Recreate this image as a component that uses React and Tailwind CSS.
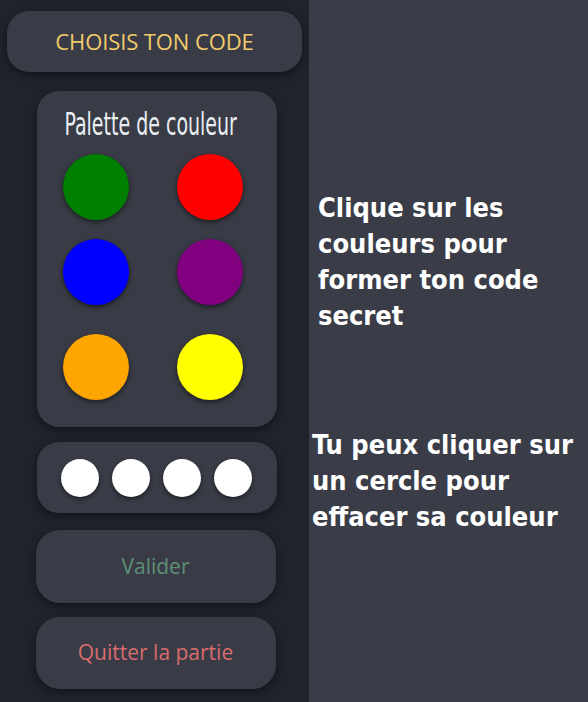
import React from 'react';

const PALETTE = [
  { name: 'vert', color: 'bg-[#008000]', mt: 'mt-[13px]' },
  { name: 'rouge', color: 'bg-[#ff0000]', mt: 'mt-[13px]' },
  { name: 'bleu', color: 'bg-[#0000ff]', mt: 'mt-[19px]' },
  { name: 'violet', color: 'bg-[#800080]', mt: 'mt-[19px]' },
  { name: 'orange', color: 'bg-[#ffa500]', mt: 'mt-[29px]' },
  { name: 'jaune', color: 'bg-[#ffff00]', mt: 'mt-[29px]' },
];

export default function App() {
  return (
    <div className="flex w-[588px] h-[702px] overflow-hidden bg-[#3a3d47]">
      {/* Sidebar */}
      <div className="w-[309px] h-full bg-[#1f232c] flex flex-col items-center font-['Open_Sans',sans-serif]">
        <button className="mt-[11px] w-[295px] h-[61px] rounded-[22px] bg-[#393c46] shadow-[0_3px_8px_rgba(0,0,0,0.45)] text-[#f2cb6c] text-[22px] tracking-[-0.1px]">
          CHOISIS TON CODE
        </button>

        {/* Palette */}
        <div className="mt-[19px] ml-[4px] w-[240px] h-[336px] rounded-[22px] bg-[#393c46] shadow-[0_3px_8px_rgba(0,0,0,0.45)] flex flex-col items-center">
          <h2 className="mt-[16px] mr-[12px] h-[34px] text-[#e9eef3] text-[32px] leading-[34px] font-['Liberation_Sans_Narrow','DejaVu_Sans_Condensed',sans-serif] scale-x-[0.66] whitespace-nowrap">
            Palette de couleur
          </h2>
          <div className="grid grid-cols-2 gap-x-[48px] mr-[7px]">
            {PALETTE.map((c) => (
              <div
                key={c.name}
                className={`${c.mt} w-[66px] h-[66px] rounded-full ${c.color} shadow-[0_2px_5px_rgba(0,0,0,0.55)]`}
              />
            ))}
          </div>
        </div>

        {/* Code secret */}
        <div className="mt-[15px] ml-[4px] w-[240px] h-[71px] rounded-[22px] bg-[#393c46] shadow-[0_3px_8px_rgba(0,0,0,0.45)] flex items-center justify-center gap-[13px]">
          {[0, 1, 2, 3].map((i) => (
            <div key={i} className="w-[38px] h-[38px] rounded-full bg-white shadow-[0_2px_4px_rgba(0,0,0,0.5)]" />
          ))}
        </div>

        <button className="mt-[17px] ml-[2px] w-[240px] h-[73px] rounded-[24px] bg-[#393c46] shadow-[0_3px_8px_rgba(0,0,0,0.45)] text-[#5e8f76] text-[21px]">
          Valider
        </button>

        <button className="mt-[14px] ml-[2px] w-[240px] h-[72px] rounded-[24px] bg-[#393c46] shadow-[0_3px_8px_rgba(0,0,0,0.45)] text-[#da6b6e] text-[21px]">
          Quitter la partie
        </button>
      </div>

      {/* Aide */}
      <div className="flex-1 pl-[3px] text-white font-['DejaVu_Sans_Condensed','Noto_Sans',sans-serif] font-semibold text-[27px] leading-[36px]">
        <p className="mt-[190px] pl-[6px] pr-[10px]">
          Clique sur les couleurs pour former ton code secret
        </p>
        <p className="mt-[93px]">
          Tu peux cliquer sur un cercle pour effacer sa couleur
        </p>
      </div>
    </div>
  );
}
